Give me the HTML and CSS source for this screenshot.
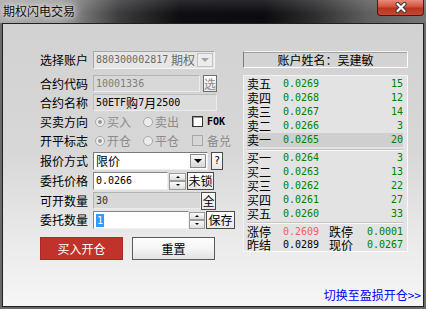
FILE: index.html
```html
<!DOCTYPE html>
<html lang="zh-CN">
<head>
  <meta charset="UTF-8" />
  <title>期权闪电交易</title>
  <link rel="stylesheet" href="styles.css">
</head>
<body>
  <div class="window">
    <div class="titlebar">
      <span class="title">期权闪电交易</span>
      <div class="close">
        <svg width="14" height="11" viewBox="0 0 14 11">
          <path d="M3.5 2 L10.5 9 M10.5 2 L3.5 9" stroke="#3c3c3c" stroke-width="4.2" stroke-linecap="round"/>
          <path d="M3.5 2 L10.5 9 M10.5 2 L3.5 9" stroke="#fff" stroke-width="2.2" stroke-linecap="round"/>
        </svg>
      </div>
    </div>

    <div class="client">
      <div class="main">
        <!-- order form -->
        <div class="form">
          <div class="row r-tall">
            <span class="lbl">选择账户</span>
            <div class="combo off w-acct">
              <span class="val"><span class="n">880300002817</span>&nbsp;期权</span>
              <span class="drop"></span>
            </div>
          </div>

          <div class="row r-code">
            <span class="lbl">合约代码</span>
            <div class="field off w-code"><span class="n">10001336</span></div>
            <div class="sbtn dim b-pick">选</div>
          </div>

          <div class="row">
            <span class="lbl">合约名称</span>
            <div class="field name w-name"><span class="n">50ETF</span>购<span class="n">7</span>月<span class="n">2500</span></div>
          </div>

          <div class="row">
            <span class="lbl">买卖方向</span>
            <span class="opt first"><i class="radio on"></i>买入</span>
            <span class="opt"><i class="radio"></i>卖出</span>
            <i class="check"></i>
            <span class="chk-text n b">FOK</span>
          </div>

          <div class="row">
            <span class="lbl">开平标志</span>
            <span class="opt first"><i class="radio on"></i>开仓</span>
            <span class="opt"><i class="radio"></i>平仓</span>
            <i class="check off"></i>
            <span class="chk-text dimtext">备兑</span>
          </div>

          <div class="row r-tall r-type">
            <span class="lbl">报价方式</span>
            <div class="combo w-type">
              <span class="val">限价</span>
              <span class="drop"></span>
            </div>
            <div class="sbtn b-help"><span class="n">?</span></div>
          </div>

          <div class="row r-tall">
            <span class="lbl">委托价格</span>
            <div class="field w-price"><span class="n">0.0266</span></div>
            <div class="spin"><i class="up"></i><i class="dn"></i></div>
            <div class="sbtn b-lock">未锁</div>
          </div>

          <div class="row">
            <span class="lbl">可开数量</span>
            <div class="field off avail w-avail"><span class="n">30</span></div>
            <div class="sbtn b-all">全</div>
          </div>

          <div class="row r-tall">
            <span class="lbl">委托数量</span>
            <div class="field w-qty"><span class="n sel">1</span></div>
            <div class="spin"><i class="up"></i><i class="dn"></i></div>
            <div class="sbtn b-save">保存</div>
          </div>

          <div class="actions">
            <div class="btn buy">买入开仓</div>
            <div class="btn reset">重置</div>
          </div>
        </div>

        <!-- account + order book -->
        <div class="side">
          <div class="namebox">账户姓名：吴建敏</div>

          <div class="book">
            <div class="q"><span class="k">卖五</span><span class="p n">0.0269</span><span class="v n">15</span></div>
            <div class="q"><span class="k">卖四</span><span class="p n">0.0268</span><span class="v n">12</span></div>
            <div class="q"><span class="k">卖三</span><span class="p n">0.0267</span><span class="v n">14</span></div>
            <div class="q"><span class="k">卖二</span><span class="p n">0.0266</span><span class="v n">3</span></div>
            <div class="q cur"><span class="k">卖一</span><span class="p n">0.0265</span><span class="v n">20</span></div>
            <div class="sep"></div>
            <div class="q"><span class="k">买一</span><span class="p n">0.0264</span><span class="v n">3</span></div>
            <div class="q"><span class="k">买二</span><span class="p n">0.0263</span><span class="v n">13</span></div>
            <div class="q"><span class="k">买三</span><span class="p n">0.0262</span><span class="v n">22</span></div>
            <div class="q"><span class="k">买四</span><span class="p n">0.0261</span><span class="v n">27</span></div>
            <div class="q"><span class="k">买五</span><span class="p n">0.0260</span><span class="v n">33</span></div>
            <div class="sep low"></div>
            <div class="q s"><span class="k">涨停</span><span class="p2 n red">0.2609</span><span class="k2">跌停</span><span class="v n">0.0001</span></div>
            <div class="q s"><span class="k">昨结</span><span class="p2 n">0.0289</span><span class="k2">现价</span><span class="v n">0.0267</span></div>
          </div>
        </div>
      </div>

      <div class="footer"><a class="switch" href="#">切换至盈损开仓&gt;&gt;</a></div>
    </div>
  </div>
</body>
</html>
```

FILE: styles.css
```css
* {
  box-sizing: border-box;
}

body {
  margin: 0;
  font-family: "Noto Sans CJK SC", "Noto Sans", sans-serif;
  font-size: 12px;
  color: #000;
  background: #5e5e5e;
}

.n {
  font-family: "DejaVu Sans Mono", "Liberation Mono", monospace;
  font-size: 10px;
}

.b {
  font-weight: bold;
}

.window {
  width: 426px;
  height: 309px;
  display: flex;
  flex-direction: column;
  background: #6a6a6a;
}

/* title bar */
.titlebar {
  height: 23px;
  flex: none;
  display: flex;
  justify-content: space-between;
  align-items: flex-start;
  background:
    linear-gradient(to bottom, rgba(255,255,255,0.12), rgba(255,255,255,0) 60%),
    linear-gradient(to right, #a8a8a8 0%, #9a9a9a 14%, #3c3c3e 28%, #0e0e12 42%, #0c0c10 62%, #2e2e30 74%, #5e5e5e 86%, #767676 100%);
}

.title {
  padding: 3px 0 0 3px;
  line-height: 16px;
  color: #101010;
  text-shadow: 0 0 4px #f0f0f0, 0 0 8px #e4e4e4, 0 0 12px #d0d0d0;
}

.close {
  width: 47px;
  height: 16px;
  margin-right: 2px;
  display: flex;
  align-items: center;
  justify-content: center;
  border: 1px solid #4d1810;
  border-top: none;
  border-radius: 0 0 4px 4px;
  background: linear-gradient(to bottom, #e98b7c 0%, #d2513e 45%, #b93322 55%, #c8482f 100%);
}

/* client area */
.client {
  flex: 1;
  margin: 0 2px 2px;
  border: 1px solid #202020;
  background: linear-gradient(to bottom, #d2d2d2 0%, #d7d7d7 45%, #e9e9e9 75%, #f6f6f6 100%);
}

.main {
  display: flex;
  padding: 27px 0 0 37px;
}

.form {
  width: 196px;
  display: flex;
  flex-direction: column;
  gap: 2px;
}

.row {
  display: flex;
  align-items: center;
  height: 17px;
  line-height: 16px;
}

.r-tall { height: 18px; }
.r-code { margin-top: 4px; }
.r-type { margin-top: 1px; }

.lbl {
  width: 53px;
  flex: none;
}

.field {
  height: 100%;
  display: flex;
  align-items: center;
  padding-left: 2px;
  white-space: nowrap;
  overflow: hidden;
  background: #fff;
  border: 1px solid;
  border-color: #858585 #efefef #efefef #858585;
}

.field.off {
  background: #d8d8d8;
  border-color: #b4b4b4 #ececec #ececec #b4b4b4;
  color: #7e7e7e;
}

.field.name {
  background: #dcdcdc;
  border-color: #bdbdbd #ececec #ececec #bdbdbd;
}

.field.avail {
  color: #333;
}

.w-acct { width: 122px; }
.w-code { width: 107px; }
.w-name { width: 124px; }
.w-type { width: 115px; }
.w-price { width: 75px; }
.w-avail { width: 108px; }
.w-qty { width: 96px; }

.sel {
  background: #3399ff;
  color: #fff;
  padding: 0 1px;
  line-height: 13px;
}

/* combo boxes */
.combo {
  height: 100%;
  display: flex;
  background: #fff;
  border: 1px solid;
  border-color: #7a7a7a #efefef #efefef #7a7a7a;
}

.combo .val {
  flex: 1;
  display: flex;
  align-items: center;
  padding-left: 2px;
  white-space: nowrap;
  overflow: hidden;
}

.drop {
  width: 16px;
  margin: 1px;
  display: flex;
  align-items: center;
  justify-content: center;
  border: 1px solid #8a8a8a;
  background: linear-gradient(#f8f8f8, #d8d8d8);
}

.drop::after {
  content: "";
  border-left: 4px solid transparent;
  border-right: 4px solid transparent;
  border-top: 4px solid #000;
}

.combo.off {
  background: #e6e6e6;
  border-color: #a8a8a8 #f4f4f4 #f4f4f4 #a8a8a8;
  color: #6a6a6a;
}

.combo.off .drop {
  border-color: #c2c2c2;
  background: #ececec;
}

.combo.off .drop::after {
  border-top-color: #a4a4a4;
}

/* small buttons */
.sbtn {
  height: 18px;
  display: flex;
  align-items: center;
  justify-content: center;
  border: 1px solid #4a4a4a;
  background: linear-gradient(#fdfdfd, #e8e8e8);
  flex: none;
}

.sbtn.dim { color: #8a8a8a; border-color: #707070; }

.b-pick { width: 14px; height: 17px; margin-left: 3px; }
.b-help { width: 12px; margin-left: 3px; }
.b-lock { width: 27px; margin-left: 1px; }
.b-all { width: 15px; }
.b-save { width: 29px; margin-left: 1px; }

.spin {
  width: 17px;
  height: 17px;
  margin-left: 1px;
  display: flex;
  flex-direction: column;
  flex: none;
}

.spin i {
  flex: 1;
  display: flex;
  align-items: center;
  justify-content: center;
  border: 1px solid #9c9c9c;
  background: linear-gradient(#fafafa, #dedede);
}

.spin i::after {
  content: "";
  border-left: 2px solid transparent;
  border-right: 2px solid transparent;
}

.spin .up::after { border-bottom: 2px solid #000; }
.spin .dn::after { border-top: 2px solid #000; }

.w-qty + .spin { width: 16px; margin-left: 0; }

/* radios and checks */
.opt {
  display: flex;
  align-items: center;
  gap: 2px;
  color: #8c8c8c;
  margin-left: 12px;
}

.opt.first { margin-left: 2px; }

.radio {
  width: 10px;
  height: 10px;
  border-radius: 50%;
  border: 1px solid #a8a8a8;
  background: #ececec;
  display: flex;
  align-items: center;
  justify-content: center;
}

.radio.on::after {
  content: "";
  width: 4px;
  height: 4px;
  border-radius: 50%;
  background: #9a9a9a;
}

.check {
  width: 11px;
  height: 11px;
  margin-left: 13px;
  border: 1px solid #333;
  background: #fff;
  box-shadow: inset 1px 1px 0 #9a9a9a;
}

.check.off {
  border-color: #a8a8a8;
  background: transparent;
  box-shadow: none;
}

.chk-text { margin-left: 4px; }
.dimtext { color: #8c8c8c; }

/* main buttons */
.actions {
  display: flex;
  gap: 9px;
  height: 23px;
  margin-top: 6px;
}

.btn {
  width: 83px;
  display: flex;
  align-items: center;
  justify-content: center;
}

.btn.buy {
  background: #c1322a;
  color: #fff;
  border: 1px solid #a92a22;
}

.btn.reset {
  background: linear-gradient(#fdfdfd 0%, #f5f5f5 50%, #e2e2e2 100%);
  border: 1px solid #5a5a5a;
}

/* right side */
.side {
  width: 165px;
  margin-left: 7px;
}

.namebox {
  height: 17px;
  line-height: 15px;
  text-align: center;
  border: 1px solid;
  border-color: #f4f4f4 #ffffff #ffffff #7c7c7c;
  box-shadow: inset 0 1px 0 #a0a0a0;
}

.book {
  margin-top: 7px;
  padding: 1px 4px 0 3px;
  background: #e3e3e3;
  border: 1px solid;
  border-color: #f2f2f2 #fafafa #fafafa #f2f2f2;
}

.q {
  display: flex;
  align-items: center;
  height: 14px;
  line-height: 14px;
}

.q.s { height: 13px; line-height: 13px; }
.q.cur { background: #cfcfcf; }

.q .k { width: 36px; }
.q .p { flex: 1; color: #008000; }
.q .v { color: #008000; text-align: right; }
.q .p2 { width: 46px; }
.q .k2 { flex: 1; }
.red { color: #ff5a5a; }

.sep {
  height: 2px;
  margin-top: 2px;
  border-top: 1px solid #c2c2c2;
  border-bottom: 1px solid #fafafa;
}

.sep.low {
  margin-top: 1px;
  margin-bottom: 1px;
}

.footer {
  margin-top: 28px;
  padding-right: 2px;
  text-align: right;
  line-height: 14px;
}

.switch {
  color: #0000ff;
  text-decoration: none;
}
```
